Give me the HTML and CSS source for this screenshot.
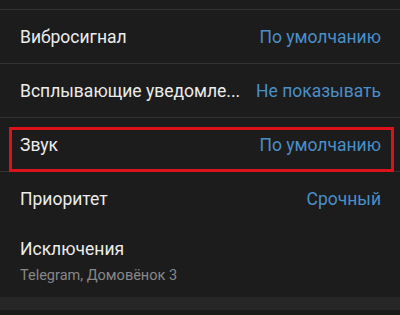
FILE: index.html
```html
<!DOCTYPE html>
<html lang="ru">
<head>
<meta charset="utf-8">
<link rel="stylesheet" href="styles.css">
</head>
<body>
<div class="screen">
  <div class="top-gap"></div>
  <div class="sep"></div>
  <div class="row"><span class="label">Вибросигнал</span><span class="value">По умолчанию</span></div>
  <div class="sep"></div>
  <div class="row"><span class="label">Всплывающие уведомле...</span><span class="value">Не показывать</span></div>
  <div class="sep"></div>
  <div class="row highlighted"><span class="label">Звук</span><span class="value">По умолчанию</span><div class="mark"></div></div>
  <div class="sep"></div>
  <div class="row"><span class="label">Приоритет</span><span class="value">Срочный</span></div>
  <div class="row tall">
    <span class="label">Исключения</span>
    <span class="sub">Telegram, Домовёнок 3</span>
  </div>
  <div class="band"></div>
  <div class="bottom"></div>
</div>
</body>
</html>
```

FILE: styles.css
```css
* { box-sizing: border-box; }
html, body { margin: 0; padding: 0; }
body {
  background: #1c1c1c;
  font-family: Roboto, "Noto Sans", sans-serif;
  width: 400px;
  height: 315px;
  overflow: hidden;
}
.screen {
  display: flex;
  flex-direction: column;
  width: 400px;
}
.top-gap { height: 9px; }
.sep { height: 1px; background: #323232; }
.row {
  height: 53px;
  display: flex;
  align-items: center;
  justify-content: space-between;
  padding: 0 19px 0 20px;
  position: relative;
}
.label {
  color: #ececec;
  font-size: 17.5px;
  white-space: nowrap;
}
.value {
  color: #4a8fc9;
  font-size: 17.5px;
  white-space: nowrap;
}
.tall {
  height: 72px;
  flex-direction: column;
  align-items: flex-start;
  justify-content: flex-start;
  padding-top: 14px;
}
.sub {
  color: #888888;
  font-size: 14.5px;
  margin-top: 8px;
}
.mark {
  position: absolute;
  top: 9px;
  left: 9px;
  right: 6px;
  height: 45px;
  border: 3px solid #dc1119;
}
.band { height: 13px; background: #262626; }
.bottom { height: 10px; background: #1a1a1a; }
```
